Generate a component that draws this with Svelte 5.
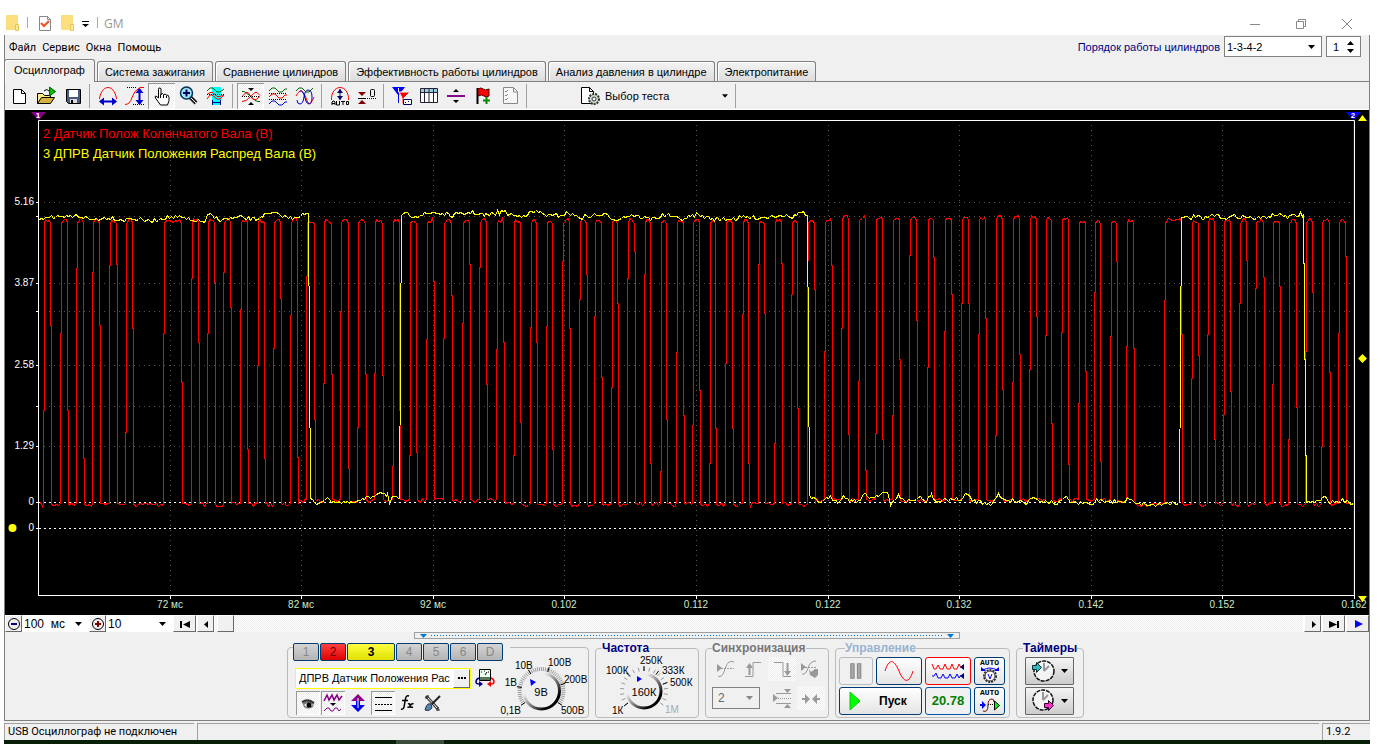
<script>
	const menu = ['Файл', 'Сервис', 'Окна', 'Помощь'];
	const tabs = [
		'Осциллограф',
		'Система зажигания',
		'Сравнение цилиндров',
		'Эффективность работы цилиндров',
		'Анализ давления в цилиндре',
		'Электропитание'
	];

	const wave = (y) => `M2 ${y + 2}l3-3h3l4 4h3l3-3h2`;

	const icons = {
		file: `<path d="M5.5 3.5h8l4 4v10h-12z" fill="#fff" stroke="#000"/><path d="M13.5 3.5v4h4" fill="none" stroke="#000"/>`,
		open: `<path d="M2.5 17.5v-10h5l2 2h6v3" fill="#ffe98a" stroke="#000"/><path d="M2.5 17.5l4-6h13l-4 6z" fill="#d8b040" stroke="#000"/><path d="M14.500 1v9l6-4.500z" fill="#0b0" stroke="#060"/><path d="M9 5q3-3 5 0" fill="none" stroke="#000"/>`,
		save: `<path d="M4.500 3.500h14v14h-12l-2-2z" fill="#4a5a80" stroke="#000"/><path d="M7 4h9v7H7z" fill="#fff"/><path d="M8 13h7v4H8z" fill="#ddd"/><path d="M9 14h2v3H9z" fill="#000"/>`,
		horiz: `<path d="M2.500 13C3 8 6 1.500 11 1.500S19 8 19.500 13" fill="none" stroke="red"/><path d="M3 15.500h16" stroke="#00c" stroke-width="2"/><path d="M2 15.500l5-4v8zM20 15.500l-5-4v8z" fill="#00c"/>`,
		vert: `<path d="M1 18.500q5 0 7-7t8-10h4" fill="none" stroke="red"/><path d="M3 1.500h9M9 18.500h11" stroke="#000" stroke-dasharray="1 1"/><path d="M15.500 3v15" stroke="#00c" stroke-width="2"/><path d="M15.500 2l-4 5h8zM15.500 19l-4-5h8z" fill="#00c"/>`,
		hand: `<path d="M7.500 12V3.500q0-2 1.500-1.500t1 2v5l0-1q2-1 2.500.5 2-1 2.500.5 3-.5 3 2.500v3l-1.500 4.500h-7l-5-7q-1-2 .500-2z" fill="#fff" stroke="#000"/><path d="M9.500 9v3M12.500 9v3M15.500 10v2" stroke="#000"/>`,
		zoom: `<path d="M12 11l6 6" stroke="#222" stroke-width="4"/><path d="M13 12l5 5" stroke="#eee"/><circle cx="8.500" cy="7" r="6" fill="#9fe4fa" stroke="#035" stroke-width="1.500"/><path d="M5 7h7M8.500 3.500v7" stroke="#006" stroke-width="2"/>`,
		measure: `<path d="M7 1h9v18H7z" fill="#0ff"/><path d="M2 5l3-3h3l4 4h3l4-3" fill="none" stroke="#060"/><path d="M2 8.500l3-2h3l4 4h3l4-2M2 13l3-4h2l5 4h3l4-4" fill="none" stroke="red"/><path d="M2 8.500h18" stroke="#000" stroke-dasharray="1 1"/><path d="M7.500 14v5M15.500 14v5M8 16.500h7" stroke="#008"/>`,
		cross: `<path d="M2 5.500h2l3 2 4 3 4 4 3 1h2" fill="none" stroke="#060"/><path d="M2 10.500l4-4h2l5 7h3l4-3M2 15.500l4-1 9-8h2l3 3" fill="none" stroke="red"/><path d="M2 10.500h18" stroke="#000" stroke-dasharray="1 1"/><path d="M8 2h6l-3 3zM8 19h6l-3-3z" fill="#000"/>`,
		waves: `<path d="${wave(3)}" fill="none" stroke="#060"/><path d="M2 7.500h18M2 13.500h18" stroke="#000" stroke-dasharray="1 1"/><path d="${wave(9)}" fill="none" stroke="red"/><path d="${wave(16)}" fill="none" stroke="#00c"/>`,
		overlay: `<path d="M2 5l3-3h3l4 4h3l4-4" fill="none" stroke="#060"/><path d="M2 10q3-6 6-5 3 3 6 12 3 2 6-6" fill="none" stroke="red"/><path d="M3 14q0 4 3 4 3 0 4-7 1-7 4-7 4 0 4 7 0 7-3 7-3 0-4-6-2-8-5-7" fill="none" stroke="#00c"/>`,
		auto: `<path d="M2.500 14C2 7 6 1.500 11 1.500S20 7 19.500 14" fill="none" stroke="red"/><path d="M11 3v11" stroke="#006"/><path d="M11 3l-3 4h6zM11 14l-3-4h6z" fill="#006"/><path d="M3 19v-3l1-1h1l1 1v3M3 17.500h3M7.500 15v4h3v-4M12 15.500h4M14 15v4M17.500 15.500h2v3h-2z" fill="none" stroke="#000"/>`,
		zero: `<path d="M2 6h8l-4 4zM2 18h8l-4-4z" fill="#800000"/><path d="M2 12.500h8" stroke="#000" stroke-width="1"/><path d="M11 12.500h9" stroke="#000" stroke-dasharray="1 1"/><rect x="14.500" y="3.500" width="4" height="7" rx="1" fill="none" stroke="#000"/>`,
		markers: `<path d="M1 1h13l-6 8v8H7V9z" fill="#00f"/><path d="M8 6h11l-6 6v6h-2v-6z" fill="#f00" stroke="#fff"/><path d="M12.500 13.500h8v5h-8z" fill="#fff" stroke="#006"/><path d="M14 16.500h1m2-1h1" stroke="#006"/><path d="M7.500 2v4" stroke="#fff"/>`,
		table: `<path d="M2.500 2.500h17v14h-17z" fill="#fff" stroke="#223"/><path d="M3 3h16v3H3z" fill="#9cd"/><path d="M3 6.500h16M6.500 3v13M11 3v13M15.500 3v13" stroke="#223"/>`,
		split: `<path d="M2 10h18" stroke="#808" stroke-width="2"/><path d="M8 6h6l-3-3zM8 14h6l-3 3z" fill="#000"/>`,
		flag: `<path d="M5.500 2v16" stroke="#000" stroke-width="2"/><path d="M6 3q3-2 5 0t6 0v7q-3 2-5 0t-6 0z" fill="#f00" stroke="#400"/><path d="M11 14.500h7M14.500 11v7" stroke="#080" stroke-width="2"/>`,
		list: `<path d="M4.500 1.500h10l4 4v12h-14z" fill="#f6f6f6" stroke="#888"/><path d="M14.500 2v4h4M6 5l1 1 2-2M6 9l1 1 2-2M6 13l1 1 2-2" fill="none" stroke="#888"/>`,
		test: `<path d="M1.500 1.500h8l4 4v12h-12z" fill="#fff" stroke="#000"/><path d="M9.500 1.500v4h4" fill="none" stroke="#000"/><circle cx="14" cy="13" r="5" fill="#cdc" stroke="#333" stroke-width="2" stroke-dasharray="2 1"/><circle cx="14" cy="13" r="2" fill="#fff" stroke="#333"/>`,
		eye: `<path d="M5 9q6-5 12 1l-1 4q-5 3-9 0z" fill="#777"/><path d="M5 9q6-4 12 1" fill="none" stroke="#333" stroke-width="2"/><path d="M7 12q5-4 9 0-5 4-9 0" fill="#fff"/><circle cx="12" cy="12" r="2.500" fill="#000"/>`,
		channels: `<path d="M2 8l3-6 2 5 3-5 2 5 3-5 2 5 3-4" fill="none" stroke="#808" stroke-width="1.500"/><path d="M8 10h6l-3 3z" fill="#000"/><path d="M2 18l3-3h2l2 3h2l2-3h2l2 3 2-2" fill="none" stroke="#808"/>`,
		shift: `<path d="M4 8l7-7 7 7h-5v2H9V8z" fill="#808"/><path d="M4 12l7 7 7-7h-5V8H9v4z" fill="#00f"/><path d="M11 5v10" stroke="#fff"/>`,
		lines: `<path d="M3 4.500h17M3 17.500h17" stroke="#000"/><path d="M3 11.500h17" stroke="#000" stroke-dasharray="2 1"/>`,
		fx: `<path d="M12 3q-3-1-3.500 3L7 14q-1 3-3 2M5 7.500h6M11 11q2-1 2 1.500t3 1.500M16.500 11q-2-1-3 1.500t-3 1.500" fill="none" stroke="#000" stroke-width="1.500"/>`,
		tools: `<path d="M4 3l12 13" stroke="#333" stroke-width="3"/><path d="M5 4l10 11" stroke="#fff"/><path d="M3 5h3V2M14 17h4M16 14v4" stroke="#333" fill="none"/><path d="M18 3L10 11" stroke="#222" stroke-width="2"/><path d="M9 11q-4-1-5 3l-1 3q4 2 7-2z" fill="#58a" stroke="#235"/>`,
		meter: `<path d="M5.500 1.500h11v11h-11z" fill="#efe" stroke="#000"/><path d="M6 9h10v3H6z" fill="#575"/><path d="M11 7l2-3M7 4h1m2-1h1m3 1h1" stroke="#000"/><path d="M5 10q-3 1-3 4 0 2 3 2" fill="none" stroke="#008" stroke-width="1.500"/><path d="M5 13v6l4-3z" fill="#008"/><path d="M17 10q3 1 3 4 0 2-3 2" fill="none" stroke="#f00" stroke-width="1.500"/><path d="M17 13v6l-4-3z" fill="#f00"/>`,
		level: `<path d="M3 17q4 3 7-7t9-7" fill="none" stroke="#999"/><path d="M2 5v8l5-4z" fill="#999"/><path d="M3 9.500h16" stroke="#999" stroke-dasharray="2 1"/>`,
		rise: `<path d="M2 17.500h8v-14h8" fill="none" stroke="#999"/><path d="M6.500 16V8" stroke="#999" stroke-width="2"/><path d="M3 9h7l-3.500-5z" fill="#999"/>`,
		fall: `<path d="M3 3.500h9v14h8" fill="none" stroke="#999"/><path d="M16.500 4v9" stroke="#999" stroke-width="2"/><path d="M13 12h7l-3.500 5z" fill="#999"/>`,
		manual: `<path d="M3 15q4 1 6-6t8-7" fill="none" stroke="#999"/><path d="M2 4v8l5-4z" fill="#999"/><path d="M3 8.500h14" stroke="#999" stroke-dasharray="2 1"/><path d="M10 10l2 3 4-3h3v6l-3 3-5-3z" fill="#999"/>`,
		window: `<path d="M1 6v8l5-4z" fill="#999"/><path d="M4 5.500h15M4 15.500h15" stroke="#999"/><path d="M6 10.500h13" stroke="#999" stroke-dasharray="1 1"/><path d="M12 1h7l-3.500 4zM12 20h7l-3.500-4z" fill="#999"/>`,
		merge: `<path d="M2 11h5M15 11h5" stroke="#999" stroke-width="2"/><path d="M5 6l5 5-5 5zM17 6l-5 5 5 5z" fill="#999"/>`
	};

	const toolbar = [
		['file', 'Новый'], ['open', 'Открыть'], ['save', 'Сохранить'], null,
		['horiz', 'Масштаб по времени'], ['vert', 'Масштаб по напряжению'], ['hand', 'Рука', true], ['zoom', 'Лупа'], ['measure', 'Измерение'], null,
		['cross', 'Наложение', true], ['waves', 'Раздельно'], ['overlay', 'Совмещение'], null,
		['auto', 'Авто'], ['zero', 'Ноль'], null,
		['markers', 'Маркеры'], ['table', 'Таблица'], ['split', 'Разделить'], ['flag', 'Добавить метку'], ['list', 'Список'], null
	];
	const channelTools = [
		['eye', 'Видимость', true], ['channels', 'Каналы', true], ['shift', 'Смещение'],
		['lines', 'Уровни', true], ['fx', 'Функция'], ['tools', 'Настройка']
	];
	const syncTools = [['level', 'Уровень'], ['rise', 'Фронт'], ['fall', 'Спад', true], ['manual', 'Вручную']];
	const syncTools2 = [['window', 'Окно'], ['merge', 'Сжать', true]];

	// left and right edge of every high pulse
	const pulses = [
		[44, 50], [61, 67], [77, 83], [93, 99], [110, 116], [126, 132], [164, 181], [192, 198],
		[208, 214], [224, 230], [241, 247], [258, 264], [274, 280], [291, 297], [307, 314],
		[324, 331], [341, 348], [358, 365], [375, 382], [393, 399], [410, 416], [427, 433],
		[444, 451], [463, 469], [480, 486], [497, 503], [514, 520], [531, 536], [547, 552],
		[563, 569], [580, 586], [595, 601], [612, 617], [628, 634], [645, 650], [661, 666],
		[677, 683], [693, 699], [710, 715], [726, 732], [743, 748], [759, 764], [775, 781],
		[792, 797], [808, 814], [825, 831], [842, 848], [859, 865], [876, 882], [893, 899],
		[910, 916], [928, 933], [945, 951], [962, 968], [979, 985], [996, 1002], [1013, 1019],
		[1030, 1036], [1046, 1051], [1062, 1068], [1079, 1085], [1095, 1100], [1111, 1116],
		[1127, 1133], [1165, 1181], [1192, 1198], [1208, 1214], [1224, 1230], [1240, 1246],
		[1256, 1263], [1273, 1279], [1289, 1296], [1306, 1312], [1322, 1329], [1339, 1345]
	];
	const camHigh1 = [[39, 217], [49, 216], [60, 218], [77, 215], [90, 219], [110, 217], [120, 219], [132, 218], [150, 221], [165, 217], [180, 217], [190, 220], [205, 221], [208, 214], [220, 219], [240, 217], [255, 219], [262, 215], [274, 213], [290, 217], [308, 213]];
	const camLow1 = [[310, 499], [316, 503], [325, 499], [350, 503], [370, 497], [380, 491], [387, 494], [389, 504], [392, 498], [399, 498]];
	const camHigh2 = [[401, 214], [420, 215], [434, 212], [450, 215], [470, 212], [485, 215], [503, 211], [515, 216], [536, 211], [550, 216], [568, 213], [580, 217], [603, 214], [615, 219], [632, 214], [650, 219], [666, 214], [680, 219], [696, 214], [715, 219], [745, 217], [765, 217], [780, 214], [790, 217], [801, 212], [807, 215]];
	const camLow2 = [[809, 497], [818, 502], [830, 497], [837, 501], [843, 496], [852, 500], [860, 500], [865, 493], [870, 498], [882, 492], [887, 493], [890, 505], [898, 494], [904, 501], [920, 498], [926, 501], [931, 494], [936, 502], [950, 498], [960, 500], [965, 493], [972, 500], [992, 503], [998, 494], [1004, 499], [1026, 502], [1031, 497], [1045, 501], [1058, 503], [1064, 497], [1072, 502], [1092, 504], [1096, 499], [1123, 502], [1129, 497], [1135, 502], [1153, 505], [1170, 502], [1179, 502]];
	const camHigh3 = [[1181, 218], [1196, 216], [1203, 219], [1212, 214], [1222, 217], [1240, 216], [1258, 218], [1275, 214], [1290, 216], [1303, 214]];
	const camLow3 = [[1306, 502], [1318, 501], [1324, 497], [1332, 502], [1345, 500], [1353, 503]];

	let seed = 7;
	function random() {
		seed = (seed * 16807) % 2147483647;
		return seed / 2147483647;
	}
	function noise(amount) {
		return Math.round((random() - 0.5) * 2 * amount);
	}

	function roughen(anchors, amount) {
		const points = [];
		for (let i = 0; i < anchors.length - 1; i++) {
			const [x1, y1] = anchors[i];
			const [x2, y2] = anchors[i + 1];
			for (let x = x1; x < x2; x += 2) {
				const y = Math.round(y1 + ((y2 - y1) * (x - x1)) / (x2 - x1)) + noise(amount);
				points.push(`${x + 0.5},${y + 0.5}`);
			}
		}
		const last = anchors[anchors.length - 1];
		points.push(`${last[0] + 0.5},${last[1] + 0.5}`);
		return points;
	}

	// a steep edge moves sideways by one pixel, at a height of its own
	function edge(x, dx, from, to) {
		const a = Math.round(from + (to - from) * (0.1 + random() * 0.8));
		return [[x, from], [x, a], [x + dx, a], [x + dx, to]].map(([px, py]) => `${px + 0.5},${py + 0.5}`);
	}

	function crankPoints() {
		const points = [];
		let x = 39;
		for (const [rise, fall] of pulses) {
			const low = (x > 290 && x < 500) || (x > 800 && x < 1120) ? 500 : 504;
			const high = x > 820 && x < 1060 ? 217 : 220;
			for (let i = x + 1; i < rise - 1; i += 2) points.push(`${i + 0.5},${low + noise(2) + 0.5}`);
			points.push(...edge(rise - 1, 1, low - 1, high + 3));
			for (let i = rise + 1; i < fall; i += 2) points.push(`${i + 0.5},${high + noise(2) + 0.5}`);
			points.push(...edge(fall, 1, high + 3, low - 1));
			x = fall + 1;
		}
		points.push('1353.5,503.5');
		return points.join(' ');
	}

	const crank = crankPoints();
	const cam = [camHigh1, camLow1, camHigh2, camLow2, camHigh3, camLow3].flatMap((part) => roughen(part, 2)).join(' ');

	const xTicks = [
		[170, '72 мс'], [301, '82 мс'], [433, '92 мс'], [564, '0.102'], [696, '0.112'],
		[828, '0.122'], [959, '0.132'], [1091, '0.142'], [1222, '0.152'], [1354, '0.162']
	];
	const yTicks = [
		[202, '5.16'], [216, ''], [283, '3.87'], [311, ''], [365, '2.58'], [406, ''], [446, '1.29'], [502, '0'], [528, '0']
	];

	const ray = (cx, cy, r, deg) => {
		const a = (deg * Math.PI) / 180;
		return `${(cx + r * Math.sin(a)).toFixed(1)} ${(cy - r * Math.cos(a)).toFixed(1)}`;
	};
	const dial = (cx, cy, from, to, angles) => angles.map((a) => `M${ray(cx, cy, from, a)}L${ray(cx, cy, to, a)}`).join('');
	const fine = Array.from({ length: 49 }, (_, i) => -125 + i * 5.2);
	const coarse = Array.from({ length: 19 }, (_, i) => -126 + i * 14);
</script>

{#snippet icon(name)}
	<svg class="icon" viewBox="0 0 22 20" aria-hidden="true">{@html icons[name]}</svg>
{/snippet}

{#snippet arrow()}
	<svg class="arrow" viewBox="0 0 7 4" aria-hidden="true"><path d="M0 0h7L3.500 4z" fill="currentColor" /></svg>
{/snippet}

{#snippet tool([name, label, pressed])}
	<button class="tool" class:pressed aria-label={label}>{@render icon(name)}</button>
{/snippet}

<div class="window">
	<header class="title">
		<svg width="100" height="20" viewBox="0 0 100 20" aria-hidden="true">
			<path d="M2 1h12v15H2z" fill="#fbdf7f" /><path d="M11.500 10.500h3v6h-3z" fill="#ffe9a0" stroke="#e6c45c" />
			<path d="M23.500 3v11M93.500 3v11" stroke="#aaa" />
			<path d="M35.500 2.500h8l3 3v11h-11z" fill="#fff" stroke="#888" /><path d="M43.500 2.500v3h3" fill="none" stroke="#888" />
			<path d="M37 9l3 3 5-5" fill="none" stroke="#f05020" stroke-width="2" />
			<path d="M57 1h12v15H57z" fill="#fbdf7f" /><path d="M66.500 10.500h3v6h-3z" fill="#ffe9a0" stroke="#e6c45c" />
			<path d="M78 7.500h7" stroke="#000" /><path d="M78 10h7l-3.500 3z" fill="#000" />
		</svg>
		<span>GM</span>
		<div class="controls">
			<button aria-label="Свернуть"><svg viewBox="0 0 12 12"><path d="M1 6.500h10" /></svg></button>
			<button aria-label="Восстановить"><svg viewBox="0 0 12 12"><path d="M1.500 3.500h7v7h-7zM3.500 3.500v-2h7v7h-2" /></svg></button>
			<button aria-label="Закрыть"><svg viewBox="0 0 12 12"><path d="M1 1l10 10M11 1L1 11" /></svg></button>
		</div>
	</header>

	<div class="body">
		<div class="menu">
			<nav>
				{#each menu as item}<a href="#menu">{item}</a>{/each}
			</nav>
			<label class="order" for="order">Порядок работы цилиндров</label>
			<div class="drop boxed order-select">
				<select id="order"><option>1-3-4-2</option></select>
				{@render arrow()}
			</div>
			<div class="spin boxed">
				<input type="text" aria-label="Номер цилиндра" value="1" />
				<div>
					<button aria-label="Больше"><svg viewBox="0 0 7 4"><path d="M0 4h7L3.500 0z" /></svg></button>
					<button aria-label="Меньше"><svg viewBox="0 0 7 4"><path d="M0 0h7L3.500 4z" /></svg></button>
				</div>
			</div>
		</div>

		<div class="tabs" role="tablist">
			{#each tabs as tab, i}
				<button role="tab" aria-selected={i === 0} class:active={i === 0}>{tab}</button>
			{/each}
		</div>

		<div class="toolbar">
			{#each toolbar as item}
				{#if item}{@render tool(item)}{:else}<i class="sep"></i>{/if}
			{/each}
			<button class="test">{@render icon('test')}<span>Выбор теста</span>{@render arrow()}</button>
			<i class="sep"></i>
		</div>

		<svg class="plot" viewBox="5 110 1364 505" role="img" aria-label="Осциллограмма">
			<g class="grid">
				{#each xTicks.slice(0, -1) as [x]}<path d="M{x}.5 125V595" />{/each}
				{#each yTicks.slice(0, 7) as [y]}<path d="M44 {y}.5H1353" />{/each}
			</g>
			<path class="zero" d="M39 502.500H1354M39 528.500H1354" />
			<polyline points={crank} stroke="#f00" fill="none" shape-rendering="crispEdges" />
			<polyline points={cam} stroke="#ff0" fill="none" shape-rendering="crispEdges" />
			<path d="M1353.500 120V595" stroke="#00f" />
			<path d="M38.500 596V120.500H1354.500V597M38 595.500H1354" stroke="#fff" fill="none" />
			{#each yTicks as [y, label]}
				<path d="M36 {y}.500h3" stroke="#fff" />
				<text class="scale" x="34" y={y + 3} text-anchor="end">{label}</text>
			{/each}
			{#each xTicks as [x, label]}
				<path d="M{x}.500 596v3" stroke="#fff" />
				<text class="time" x={x} y="608" text-anchor="middle">{label}</text>
			{/each}
			<path d="M31 112h15l-7.500 8z" fill="#808" />
			<path d="M1346 112h15l-7.500 8z" fill="#00f" />
			<text class="mark" x="38" y="118" text-anchor="middle">1</text>
			<text class="mark" x="1353" y="118" text-anchor="middle">2</text>
			<path d="M1358 121h9l-4.500-6zM1358 596h9l-4.500 6zM1362.500 354l4.500 4.500-4.500 4.500-4.500-4.500z" fill="#ff0" />
			<circle cx="12.500" cy="528" r="4" fill="#ff0" />
			<text class="name" x="43" y="138" fill="#f00">2 Датчик Полож Коленчатого Вала (В)</text>
			<text class="name" x="43" y="158" fill="#ff0">3 ДПРВ Датчик Положения Распред Вала (В)</text>
		</svg>

		<div class="scroll">
			<button class="raised" aria-label="Уменьшить"><svg viewBox="0 0 14 14"><circle cx="7" cy="7" r="5.500" fill="none" stroke="#000" /><path d="M4 7h6" stroke="#008" stroke-width="2" /></svg></button>
			<div class="drop span"><select aria-label="Развёртка"><option>100 &nbsp;мс</option></select>{@render arrow()}</div>
			<button class="raised" aria-label="Увеличить"><svg viewBox="0 0 14 14"><circle cx="7" cy="7" r="5.500" fill="none" stroke="#000" /><path d="M4 7h6M7 4v6" stroke="#800000" stroke-width="2" /></svg></button>
			<div class="drop span"><select aria-label="Масштаб"><option>10</option></select>{@render arrow()}</div>
			<button class="raised wide" aria-label="В начало"><svg viewBox="0 0 14 14"><path d="M2 4h2v7H2zM12 4v7L5 7.500z" /></svg></button>
			<button class="raised" aria-label="Назад"><svg viewBox="0 0 14 14"><path d="M9 4v7L5 7.500z" /></svg></button>
			<div class="track"><button class="raised" aria-label="Ползунок"></button></div>
			<button class="raised" aria-label="Вперёд"><svg viewBox="0 0 14 14"><path d="M6 4v7l4-3.500z" /></svg></button>
			<button class="raised wide" aria-label="В конец"><svg viewBox="0 0 14 14"><path d="M10 4h2v7h-2zM2 4v7l8-3.500z" /></svg></button>
			<button class="raised wide" aria-label="Воспроизвести"><svg viewBox="0 0 14 14"><path d="M4 3v8l8-4z" fill="#00f" /></svg></button>
		</div>

		<div class="splitter">
			<svg viewBox="0 0 7 4"><path d="M0 0h7L3.500 4z" /></svg><i></i><svg viewBox="0 0 7 4"><path d="M0 0h7L3.500 4z" /></svg>
		</div>

		<div class="panel">
			<fieldset class="channel">
				<div class="numbers">
					<button disabled>1</button>
					<button class="red">2</button>
					<button class="yellow">3</button>
					<button disabled>4</button>
					<button disabled>5</button>
					<button disabled>6</button>
					<button disabled>D</button>
				</div>
				<div class="channel-body">
					<div>
						<div class="row">
							<div class="sensor">
								<input type="text" aria-label="Название канала" value="ДПРВ Датчик Положения Рас" />
								<button class="raised" aria-label="Выбрать датчик"><svg viewBox="0 0 14 14"><path d="M3 6h2v2H3zM6 6h2v2H6zM9 6h2v2H9z" /></svg></button>
							</div>
							<button class="tool" aria-label="Прибор">{@render icon('meter')}</button>
						</div>
						<div class="row small">
							{#each channelTools as item}{@render tool(item)}{/each}
						</div>
					</div>
					<svg class="knob" viewBox="500 654 88 64" role="img" aria-label="Диапазон 9В">
						<defs>
							<linearGradient id="rim" x1="0" y1="0" x2="1" y2="1">
								<stop offset="0.300" stop-color="#eee" /><stop offset="0.600" stop-color="#666" /><stop offset="0.800" stop-color="#000" />
							</linearGradient>
						</defs>
						<path d={dial(541.5, 691, 20, 24, fine)} stroke="#999" />
						<path d={dial(541.5, 691, 20, 25, [-125, -80, -32, 18, 72, 125])} stroke="#000" />
						<circle cx="541.500" cy="691" r="18" fill="#efefef" stroke="url(#rim)" stroke-width="3" />
						<path d="M530 679l6 3-5 4z" fill="#00f" />
						<text x="521" y="714" text-anchor="end">0,1В</text>
						<text x="517" y="686" text-anchor="end">1В</text>
						<text x="515" y="669">10В</text>
						<text x="548" y="666">100В</text>
						<text x="564" y="683">200В</text>
						<text x="561" y="714">500В</text>
						<text class="value" x="541" y="696" text-anchor="middle">9В</text>
					</svg>
				</div>
			</fieldset>

			<fieldset class="freq">
				<legend>Частота</legend>
				<svg class="knob" viewBox="600 654 96 64" role="img" aria-label="Частота 160К">
					<path d={dial(645, 691, 20, 24, coarse)} stroke="#999" />
					<path d={dial(645, 691, 20, 25, [-127, -44, 0, 36, 70])} stroke="#000" />
					<circle cx="645" cy="691" r="17" fill="#efefef" stroke="url(#rim)" stroke-width="3" />
					<path d="M638 676v6l5-3z" fill="#00f" />
					<text x="607" y="674">100К</text>
					<text x="641" y="664">250К</text>
					<text x="663" y="674">333К</text>
					<text x="671" y="686">500К</text>
					<text x="613" y="714">1К</text>
					<text x="666" y="713" class="dim">1М</text>
					<text class="value" x="645" y="696" text-anchor="middle">160К</text>
				</svg>
			</fieldset>

			<fieldset class="sync" disabled>
				<legend>Синхронизация</legend>
				<div class="row">{#each syncTools as item}{@render tool(item)}{/each}</div>
				<div class="row">
					<div class="drop boxed"><select aria-label="Канал синхронизации"><option>2</option></select>{@render arrow()}</div>
					{#each syncTools2 as item}{@render tool(item)}{/each}
				</div>
			</fieldset>

			<fieldset class="control">
				<legend>Управление</legend>
				<button class="key off" aria-label="Пауза" disabled><svg viewBox="0 0 14 18"><path d="M2.500 2.500h3v13h-3zM8.500 2.500h3v13h-3z" fill="#aaa" stroke="#888" /></svg></button>
				<button class="key" aria-label="Синус"><svg viewBox="0 0 30 20"><path d="M1 10C5-3 10-2 15 10s10 13 14 0" fill="none" stroke="red" /></svg></button>
				<button class="key hot" aria-label="Запись"><svg viewBox="0 0 34 20"><path d="M1 3l2 5h2l2-4 2 4h3l2-5 2 5h3l2-5 2 5h3l2-5 2 4" fill="none" stroke="red" /><path d="M1 15h2l2-3 2 5h3l2-4 2 4h3l2-4 2 4h3l2-4 2 4 2-3" fill="none" stroke="#00f" /><path d="M33 3v6l-4-3zM33 12v6l-4-3z" fill="#006" /></svg></button>
				<button class="key auto"><b>AUTO</b><svg viewBox="0 0 20 16"><circle cx="10" cy="9" r="6" fill="#fff" stroke="#333" stroke-width="2" stroke-dasharray="2 1" /><circle cx="10" cy="9" r="5" fill="#fff" stroke="#333" /><path d="M3 3q7-4 14 0M8 7l2 5 2-5" fill="none" stroke="#00f" /><path d="M1 0v4h5zM19 0v4h-5z" fill="#00f" /></svg></button>
				<button class="key start"><svg viewBox="0 0 12 20"><path d="M1 1v18l10-9z" fill="#0f0" stroke="#0c0" /></svg><span>Пуск</span></button>
				<output class="key">20.78</output>
				<button class="key auto"><b>AUTO</b><svg viewBox="0 0 20 16"><path d="M3 14q5 2 5-6 0-6 4-6 2 0 2 3" fill="none" stroke="#800000" /><path d="M0 8h3" stroke="#00f" stroke-width="2" /><path d="M2 4v8l4-4z" fill="#00f" /><path d="M8 7.500h5" stroke="#000" stroke-dasharray="1 1" /><path d="M14.500 4v9l5-4.500z" fill="#0f0" stroke="#000" /></svg></button>
			</fieldset>

			<fieldset class="timers">
				<legend>Таймеры</legend>
				<button class="key gray" aria-label="Таймер пуска"><svg viewBox="0 0 24 24"><circle cx="13" cy="12" r="10" fill="#f4f4f4" stroke="#111" stroke-width="1.500" stroke-dasharray="4 1" /><path d="M13 12V4M13 12l5-5" stroke="#999" stroke-width="2" /><path d="M1.500 6.500h4v-3l5 5-5 5v-3h-4z" fill="#3bb" stroke="#033" /></svg>{@render arrow()}</button>
				<button class="key gray" aria-label="Таймер остановки"><svg viewBox="0 0 24 24"><circle cx="12" cy="11" r="10" fill="#f4f4f4" stroke="#111" stroke-width="1.500" stroke-dasharray="4 1" /><path d="M12 11V3M12 11l5-5" stroke="#999" stroke-width="2" /><path d="M13.500 14.500h4v-3l5 5-5 5v-3h-4z" fill="#f3c" stroke="#303" /></svg>{@render arrow()}</button>
			</fieldset>
		</div>
	</div>

	<footer class="status">
		<span>USB Осциллограф не подключен</span>
		<span></span>
		<span>1.9.2</span>
	</footer>
	<div class="desk"></div>
</div>

<style>
	:global(body) {
		background: #fff;
		font: 11px/14px 'Liberation Sans', Arial, sans-serif;
		color: #000;
	}
	button, select, input, output {
		font: inherit;
		color: inherit;
		margin: 0;
		padding: 0;
		border: 0;
		background: none;
		border-radius: 0;
		box-sizing: border-box;
	}
	svg {
		display: block;
		flex: none;
	}
	.window {
		margin: 0 12px 0 4px;
	}
	.title {
		display: flex;
		align-items: center;
		height: 35px;
		padding-top: 12px;
		box-sizing: border-box;
		font: 12px/14px 'Open Sans', sans-serif;
		color: #999;
	}
	.controls {
		display: flex;
		margin-left: auto;
	}
	.controls button {
		width: 46px;
		display: grid;
		place-items: center;
	}
	.controls svg {
		width: 12px;
		stroke: #888;
		fill: none;
	}
	.body {
		background: #f0f0f0;
		border: solid #808080;
		border-width: 0 1px 1px;
	}
	.menu {
		display: flex;
		gap: 4px;
		height: 24px;
		padding-right: 8px;
	}
	nav {
		display: flex;
		align-items: center;
		gap: 6px;
		padding: 2px 0 0 4px;
		margin-right: auto;
		font: 11px/14px Roboto, sans-serif;
	}
	nav a {
		color: #000;
		text-decoration: none;
	}
	.order {
		align-self: center;
		color: #000080;
	}
	.drop {
		display: flex;
		align-items: center;
		position: relative;
		background: #fff;
	}
	.drop select {
		appearance: none;
		width: 100%;
		height: 100%;
		padding-left: 2px;
		opacity: 1;
	}
	.arrow {
		width: 7px;
		height: 4px;
		pointer-events: none;
	}
	.drop .arrow {
		position: absolute;
		right: 6px;
	}
	.boxed {
		border: 1px solid #808080;
		background: #fff;
		box-sizing: border-box;
		height: 21px;
		margin-top: 1px;
	}
	.order-select {
		width: 98px;
	}
	.spin {
		display: flex;
		width: 35px;
	}
	.spin input {
		width: 20px;
		padding-left: 6px;
	}
	.spin div {
		display: flex;
		flex-direction: column;
		justify-content: center;
		gap: 4px;
	}
	.spin button svg {
		width: 7px;
		height: 4px;
	}

	.tabs {
		display: flex;
		align-items: flex-end;
		gap: 2px;
		height: 22px;
		border-bottom: 1px solid #808080;
	}
	.tabs button {
		height: 20px;
		padding: 0 7px;
		border: 1px solid #808080;
		border-bottom: 0;
		border-radius: 3px 3px 0 0;
		background: linear-gradient(#f4f4f4, #dcdcdc);
		box-shadow: inset 1px 1px #fff;
		white-space: nowrap;
	}
	.tabs .active {
		height: 23px;
		padding: 0 9px 2px;
		margin: 0 0 -1px -1px;
		background: #f0f0f0;
	}
	.toolbar {
		display: flex;
		align-items: center;
		height: 27px;
		border-bottom: 1px solid #fff;
	}
	.tool {
		width: 27px;
		height: 26px;
		display: grid;
		place-items: center;
	}
	.icon {
		width: 22px;
		height: 20px;
	}
	.pressed {
		background: repeating-conic-gradient(#fff 0 25%, #ececec 0 50%) 0 0 / 2px 2px;
		box-shadow: inset 1px 1px #999, inset -1px -1px #fff;
	}
	.sep {
		width: 1px;
		height: 24px;
		margin: 0 4px 0 3px;
		background: #a0a0a0;
	}
	.test {
		display: flex;
		align-items: center;
		width: 201px;
		height: 26px;
		padding: 0 4px 0 49px;
		gap: 3px;
	}
	.test .arrow {
		width: 6px;
		margin-left: auto;
	}

	.plot {
		width: 100%;
		background: #000;
	}
	.grid path {
		stroke: #555;
		stroke-dasharray: 1 4;
		fill: none;
	}
	.zero {
		stroke: #fff;
		stroke-dasharray: 2 3;
	}
	.scale, .time {
		font-size: 10px;
		fill: #fff;
	}
	.time {
		fill: #cfe8cf;
	}
	.mark {
		font-size: 8px;
		font-weight: bold;
		fill: #fff;
	}
	.name {
		font-size: 13px;
	}

	.scroll {
		display: flex;
		gap: 1px;
		height: 17px;
		background: #fff;
	}
	.raised {
		width: 17px;
		display: grid;
		place-items: center;
		background: #f0f0f0;
		border: 1px solid;
		border-color: #fff #696969 #696969 #fff;
	}
	.raised svg {
		width: 14px;
		height: 14px;
	}
	.wide {
		width: 23px;
	}
	.scroll .span {
		width: 65px;
		font-size: 12px;
	}
	.scroll .span select {
		padding-left: 1px;
	}
	.track {
		flex: 1;
		display: flex;
		padding-left: 2px;
		background: repeating-conic-gradient(#fff 0 25%, #ececec 0 50%) 0 0 / 2px 2px;
	}
	.splitter {
		display: flex;
		align-items: center;
		gap: 4px;
		width: 40%;
		height: 7px;
		margin: 0 auto;
		padding: 0 5px;
		box-sizing: border-box;
		border: 1px solid #a0a0a0;
	}
	.splitter svg {
		width: 7px;
		height: 4px;
		fill: #0078d7;
	}
	.splitter i {
		flex: 1;
		height: 1px;
		background: repeating-linear-gradient(90deg, #0078d7 0 1px, transparent 1px 3px);
	}

	.panel {
		display: flex;
		justify-content: center;
		align-items: flex-end;
		gap: 6px;
		padding: 3px 3px 2px 0;
	}
	fieldset {
		margin: 0;
		padding: 0;
		min-width: 0;
		height: 76px;
		box-sizing: border-box;
		border: 1px solid #bbb;
		border-radius: 4px;
	}
	legend {
		margin-left: 6px;
		padding: 0;
		font-size: 12px;
		font-weight: bold;
		line-height: 12px;
		color: #000080;
	}
	.row {
		display: flex;
		align-items: center;
	}
	.channel {
		width: 302px;
		height: 71px;
	}
	.numbers {
		display: flex;
		gap: 1px;
		width: max-content;
		margin: -5px 0 0 5px;
		padding-right: 7px;
		background: #f0f0f0;
		font-size: 12px;
	}
	.numbers button {
		width: 26px;
		height: 18px;
		border: 1px solid #003c74;
		border-radius: 2px;
		background: linear-gradient(#d4d4d4, #b4b4b4);
		color: #888;
	}
	.numbers .red {
		background: linear-gradient(#ff4040, #e00000);
		color: #600;
	}
	.numbers .yellow {
		width: 48px;
		background: linear-gradient(#ffff40, #e0e000);
		color: #000;
		font-weight: bold;
	}
	.channel-body {
		display: flex;
		justify-content: space-between;
		height: 57px;
	}
	.channel-body .row {
		margin: 5px 0 0 7px;
	}
	.channel-body .row.small {
		margin: 1px 0 0 8px;
		gap: 1px;
	}
	.small .tool {
		width: 24px;
		height: 23px;
	}
	.row .tool {
		height: 24px;
	}
	.sensor {
		display: flex;
		width: 176px;
		height: 21px;
		box-sizing: border-box;
		border: 1px solid #ff0;
		background: #fff;
	}
	.sensor input {
		flex: 1;
		min-width: 0;
		padding-left: 3px;
	}
	.row > .sensor + .tool {
		width: 28px;
	}
	.knob {
		width: 88px;
		font-size: 10px;
		align-self: flex-end;
	}
	.value {
		font-size: 11px;
	}
	.dim {
		fill: #aaa;
	}
	.freq {
		width: 104px;
	}
	.freq .knob {
		width: 96px;
		margin: 0 auto;
	}
	.sync {
		width: 124px;
		color: #666;
	}
	.sync legend {
		color: #777;
	}
	.sync .row {
		height: 29px;
		padding-left: 6px;
	}
	.sync .tool {
		width: 28px;
	}
	.sync .pressed {
		box-shadow: none;
	}
	.sync .boxed {
		width: 48px;
		height: 22px;
		margin-right: 9px;
		background: #f0f0f0;
		font-size: 12px;
	}
	.sync .boxed select {
		padding-left: 5px;
	}
	.sync .arrow {
		color: #888;
	}
	.control {
		width: 175px;
		display: grid;
		grid-template-columns: 34px 46px 46px 31px;
		grid-auto-rows: 28px;
		gap: 2px 3px;
		padding: 3px 0 0 3px;
	}
	.control legend {
		color: #99b4d1;
	}
	.key {
		display: flex;
		align-items: center;
		justify-content: center;
		border: 1px solid #003c74;
		border-radius: 3px;
		background: linear-gradient(#fff, #e4e4e4);
		font-size: 12px;
		font-weight: bold;
	}
	.key.off {
		border-color: #bbb;
		background: #f0f0f0;
	}
	.key.hot {
		border-color: #f00;
	}
	.control .key > svg {
		height: 20px;
	}
	.auto {
		flex-direction: column;
		font: 8px/8px 'Liberation Mono', monospace;
	}
	.control .auto > svg {
		height: 16px;
	}
	.start {
		grid-column: span 2;
		justify-content: flex-start;
		gap: 18px;
		padding-left: 9px;
	}
	output.key {
		color: #008000;
		font-size: 13px;
		border-color: #0054a6;
		background: #f0f0f0;
	}
	.timers {
		width: 68px;
		display: grid;
		grid-template-rows: 28px 28px;
		gap: 2px;
		padding: 3px 9px 0 8px;
	}
	.timers legend {
		margin-left: -2px;
	}
	.gray {
		border-color: #666;
		border-radius: 1px;
		background: linear-gradient(#f4f4f4, #ccc);
		gap: 6px;
	}
	.gray > svg:first-child {
		width: 24px;
		height: 24px;
	}

	.status {
		display: flex;
		gap: 3px;
		height: 17px;
		padding-top: 2px;
		background: #f0f0f0;
		font: 11px/16px Roboto, sans-serif;
	}
	.status span {
		border: solid #a0a0a0;
		border-width: 1px 0 0 1px;
		padding-left: 3px;
		width: 186px;
		height: 16px;
	}
	.status span:nth-child(2) {
		flex: 1;
	}
	.status span:last-child {
		width: 44px;
	}
	.desk {
		height: 4px;
		background: linear-gradient(90deg, #061f06 0 392px, #3c4c3c 392px 440px, #061f06 440px);
	}
</style>
